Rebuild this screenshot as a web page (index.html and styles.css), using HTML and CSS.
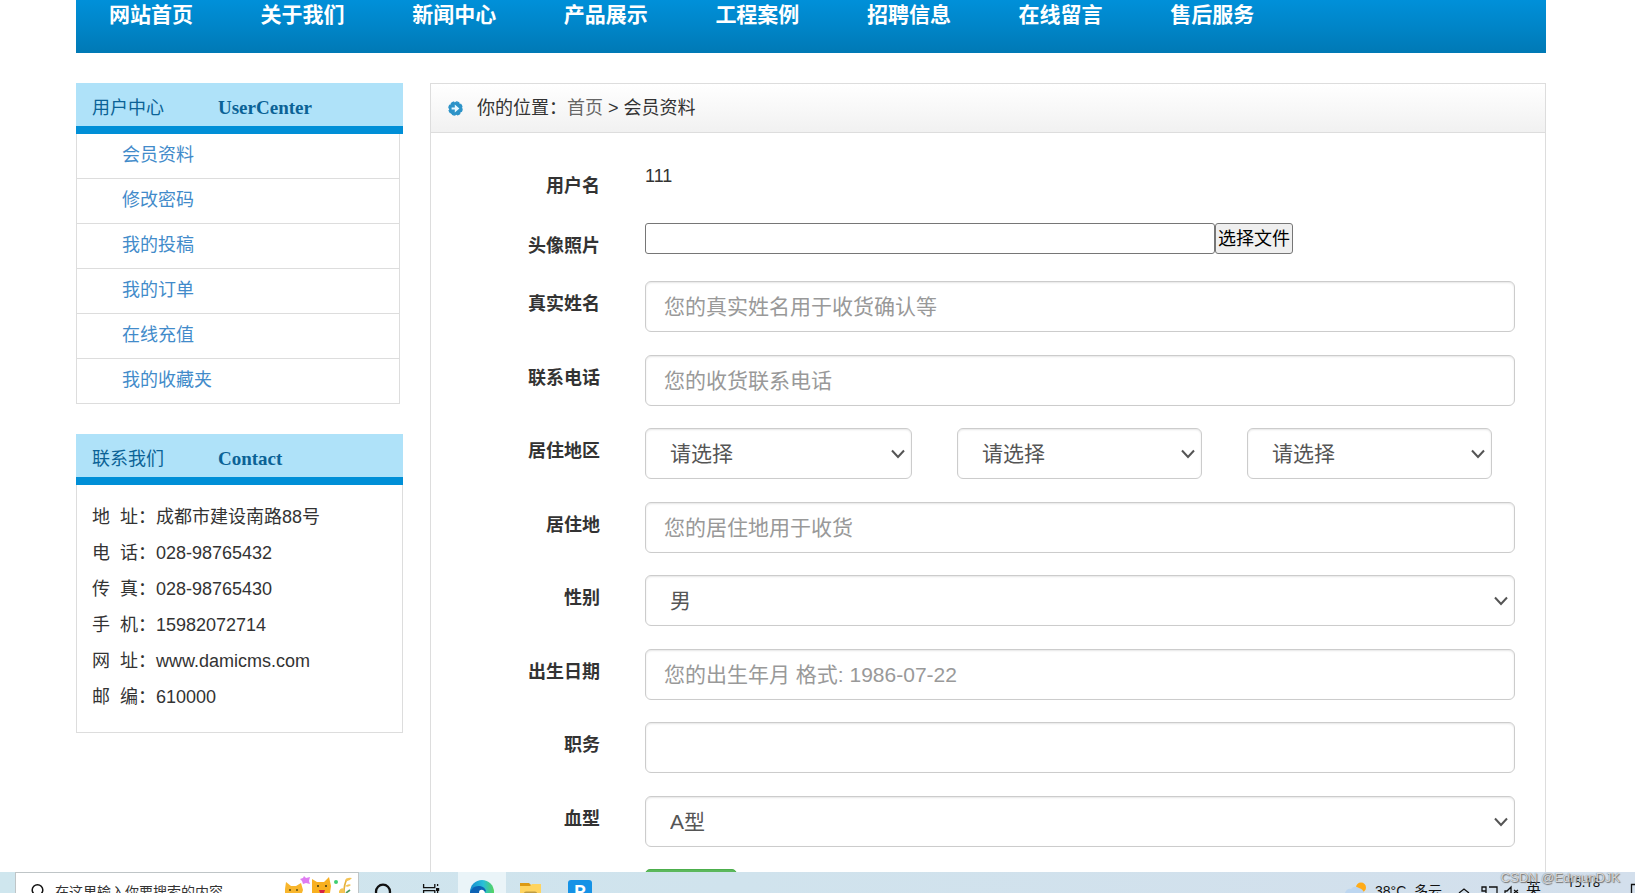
FILE: index.html
```html
<!DOCTYPE html>
<html lang="zh-CN">
<head>
<meta charset="utf-8">
<title>会员资料</title>
<link rel="stylesheet" href="styles.css">
</head>
<body>
<div class="page">
  <nav class="nav">
    <a href="#">网站首页</a>
    <a href="#">关于我们</a>
    <a href="#">新闻中心</a>
    <a href="#">产品展示</a>
    <a href="#">工程案例</a>
    <a href="#">招聘信息</a>
    <a href="#">在线留言</a>
    <a href="#">售后服务</a>
  </nav>
  <div class="columns">
    <aside class="sidebar">
      <section>
        <h2 class="side-head">用户中心<span class="side-en">UserCenter</span></h2>
        <ul class="side-menu">
          <li><a href="#">会员资料</a></li>
          <li><a href="#">修改密码</a></li>
          <li><a href="#">我的投稿</a></li>
          <li><a href="#">我的订单</a></li>
          <li><a href="#">在线充值</a></li>
          <li><a href="#">我的收藏夹</a></li>
        </ul>
      </section>
      <section>
        <h2 class="side-head">联系我们<span class="side-en">Contact</span></h2>
        <div class="contact">
          <div>地&nbsp; 址：成都市建设南路88号</div>
          <div>电&nbsp; 话：028-98765432</div>
          <div>传&nbsp; 真：028-98765430</div>
          <div>手&nbsp; 机：15982072714</div>
          <div>网&nbsp; 址：www.damicms.com</div>
          <div>邮&nbsp; 编：610000</div>
        </div>
      </section>
    </aside>
    <main class="main">
      <div class="crumbs">
        <svg class="crumb-icon" width="15" height="15" viewBox="0 0 15 15"><circle cx="7.5" cy="7.5" r="6.6" fill="#2d93c8" stroke="#2d93c8" stroke-width="1.4" stroke-dasharray="3.6 1.6"/><path d="M3.6 6.4h3.2V3.6l4.6 3.9-4.6 3.9V8.6H3.6z" fill="#e8f8ff"/></svg>
        <span>你的位置：<a href="#">首页</a> &gt; 会员资料</span>
      </div>
      <form class="form">
        <div class="row row-name">
          <span class="label">用户名</span>
          <div class="static">111</div>
        </div>
        <div class="row row-file">
          <label class="label" for="photo">头像照片</label>
          <div class="file"><input class="file-input" id="photo" type="text"><button class="file-button" type="button">选择文件</button></div>
        </div>
        <div class="row">
          <label class="label" for="realname">真实姓名</label>
          <input class="control" id="realname" type="text" placeholder="您的真实姓名用于收货确认等">
        </div>
        <div class="row">
          <label class="label" for="phone">联系电话</label>
          <input class="control" id="phone" type="text" placeholder="您的收货联系电话">
        </div>
        <div class="row">
          <label class="label" for="province">居住地区</label>
          <div class="thirds">
            <div><select class="control" id="province"><option>请选择</option></select></div>
            <div><select class="control" aria-label="城市"><option>请选择</option></select></div>
            <div><select class="control" aria-label="区县"><option>请选择</option></select></div>
          </div>
        </div>
        <div class="row">
          <label class="label" for="address">居住地</label>
          <input class="control" id="address" type="text" placeholder="您的居住地用于收货">
        </div>
        <div class="row">
          <label class="label" for="sex">性别</label>
          <select class="control" id="sex"><option>男</option><option>女</option></select>
        </div>
        <div class="row">
          <label class="label" for="birth">出生日期</label>
          <input class="control" id="birth" type="text" placeholder="您的出生年月 格式: 1986-07-22">
        </div>
        <div class="row">
          <label class="label" for="job">职务</label>
          <input class="control" id="job" type="text">
        </div>
        <div class="row">
          <label class="label" for="blood">血型</label>
          <select class="control" id="blood"><option>A型</option><option>B型</option></select>
        </div>
        <div class="row">
          <span class="label"></span>
          <button class="submit" type="submit" aria-label="提交"></button>
        </div>
      </form>
    </main>
  </div>
</div>
<footer class="taskbar">
  <div class="search">
    <svg width="39" height="20" viewBox="0 0 39 20"><circle cx="21.5" cy="17" r="5.3" fill="none" stroke="#111" stroke-width="1.5"/></svg>
    <span class="search-text">在这里输入你要搜索的内容</span>
    <svg width="74" height="20" viewBox="0 0 74 20">
      <path d="M1 20v-4l1-7 5 4h5l5-3 2 7-1 3z" fill="#f8b62d"/><path d="M6 16v2M13 16v2" stroke="#6b5410" stroke-width="1.6"/>
      <path d="M20 3l2 2 4-1-1 4 1 3-4-1-3 1-1-3-2-2 3-1z" fill="#df7cf2"/>
      <path d="M28 20V6l5 3h7l5-5 2 9-1 7z" fill="#f8b01f"/><path d="M34 12v2M42 12v2" stroke="#5d4d12" stroke-width="1.8"/><path d="M35 17h6l-1 3h-4z" fill="#d82244"/>
      <circle cx="52" cy="9" r="2" fill="#3fce72"/>
      <path d="M60 20q0-9 3-14" stroke="#e5b13b" stroke-width="1.6" fill="none"/><path d="M61 8q1-4 7-3-3 4-7 3zM61 13q4-3 6-1-3 3-6 1zM55 18q2-4 5-2v4h-5z" fill="#f4c454"/><path d="M62 20l4-3" stroke="#4c9b61" stroke-width="1.6"/>
    </svg>
  </div>
  <svg class="app" viewBox="0 0 48 21"><circle cx="24" cy="19.7" r="7" fill="none" stroke="#111" stroke-width="2.3"/></svg>
  <svg class="app" viewBox="0 0 48 21"><path d="M16.6 12v3.6h11.2V12M16.6 21v-2.4h11.2V21M30.6 12v2M30.6 19v2" fill="none" stroke="#111" stroke-width="1.3"/><rect x="29" y="16" width="3.2" height="3" fill="#111"/></svg>
  <svg class="app app-active" viewBox="0 0 48 21">
    <defs><linearGradient id="edge" x1="0" x2="1"><stop offset="0" stop-color="#168cce"/><stop offset=".55" stop-color="#29bfd8"/><stop offset="1" stop-color="#55d45d"/></linearGradient></defs>
    <circle cx="24" cy="20" r="12" fill="url(#edge)"/><path d="M12 20q3-7 10-6 5 1 6 5l-2 2H12z" fill="#0d63b5"/><path d="M21 21q0-4 4-3 2 1 2 3z" fill="#fff"/>
  </svg>
  <svg class="app" viewBox="0 0 48 21"><path d="M14 11h9l2 2v3H14z" fill="#dc9a13"/><path d="M14 14h10l2-2h9v9H14z" fill="#ffd45f"/><path d="M18 21q0-1.500 2-1.500h9q2 0 2 1.500z" fill="#bf9c42"/></svg>
  <div class="app app-letter"><span>P</span></div>
  <div class="tray">
    <svg width="24" height="21" viewBox="0 0 24 21"><circle cx="17" cy="15.500" r="5" fill="#ffab18"/><path d="M1 21q2-5 6-4 3-4 8-1 4 1 5 5z" fill="#bdd6f0"/></svg>
    <span class="weather">38°C&nbsp; 多云</span>
    <svg class="tray-icons" width="64" height="21" viewBox="0 0 64 21" fill="none" stroke="#111" stroke-width="1.300"><path d="M2 21l5-4 5 4M32 15h8v6M29 21v-3M25 15h4v4h-4zM48 21v-2h2l4-4v6M57 18l4 3M61 18l-4 3"/></svg>
    <span class="ime">英</span>
    <span class="clock">15:18</span>
    <svg width="6" height="21" viewBox="0 0 6 21"><path d="M6 12.500H2.500V21" fill="none" stroke="#111" stroke-width="1.300"/></svg>
  </div>
</footer>
<div class="watermark">CSDN @EdmunDJK</div>
</body>
</html>
```
FILE: styles.css
```css
* { box-sizing: border-box; }

body {
  margin: 0;
  height: 100vh;
  display: flex;
  flex-direction: column;
  overflow: hidden;
  background: #fff;
  color: #333;
  font: 18px/26px "Liberation Sans", "Noto Sans CJK SC", sans-serif;
}

a { text-decoration: none; }
input, select, button { font-family: inherit; margin: 0; }

.page {
  flex: 1;
  min-height: 0;
  overflow: hidden;
  padding: 0 89px 0 76px;
}

/* top navigation */
.nav {
  display: flex;
  height: 53px;
  padding-left: 33px;
  background: linear-gradient(#0090d9, #0085c8 50%, #0079b5);
}
.nav a {
  flex: 0 0 auto;
  width: 10.55%;
  color: #fff;
  font-size: 21px;
  font-weight: bold;
  line-height: 30px;
}

.columns {
  display: flex;
  align-items: flex-start;
  gap: 27px;
  margin-top: 30px;
}

/* left column */
.sidebar {
  flex: 0 0 327px;
  display: flex;
  flex-direction: column;
  gap: 30px;
}
.side-head {
  display: flex;
  align-items: center;
  gap: 54px;
  height: 51px;
  margin: 0;
  padding: 6px 16px 0;
  background: #afe2f9;
  border-bottom: 8px solid #008fd7;
  color: #0b6296;
  font-size: 18px;
  font-weight: normal;
}
.side-en {
  font: bold 19px/26px "Liberation Serif", serif;
}
.side-menu {
  list-style: none;
  margin: 0 3px 0 0;
  padding: 0;
  border: 1px solid #ddd;
  border-width: 0 1px 0 1px;
}
.side-menu li {
  height: 45px;
  padding-left: 45px;
  border-bottom: 1px solid #ddd;
  line-height: 43px;
}
.side-menu a { color: #428bca; }
.contact {
  padding: 14px 15px 17px;
  border: 1px solid #ddd;
  border-top: 0;
  line-height: 36px;
}

/* right column */
.main {
  flex: 1;
  min-width: 0;
  border: 1px solid #ddd;
}
.crumbs {
  display: flex;
  align-items: center;
  gap: 14px;
  height: 49px;
  padding-left: 17px;
  background: linear-gradient(#fff, #f1f1f1);
  border-bottom: 1px solid #ddd;
}
.crumbs a { color: #666; }
.form { padding: 30px 30px 30px 0; }
.row {
  display: flex;
  align-items: flex-start;
  gap: 45px;
  margin-bottom: 22px;
}
.row:nth-child(odd) { margin-bottom: 23px; }
.label {
  flex: 0 0 169px;
  padding-top: 10px;
  font-weight: bold;
  text-align: right;
}
.row-name { height: 37px; }
.row-file { height: 36px; }
.static { line-height: 26px; }
.file { display: flex; flex: 1; }
.file-input {
  width: 570px;
  height: 31px;
  border: 1px solid #767676;
  border-radius: 3px;
  font-size: 18px;
}
.file-button {
  height: 31px;
  padding: 0 2px;
  border: 1px solid #767676;
  border-radius: 3px;
  background: #efefef;
  color: #000;
  font-size: 18px;
  line-height: 26px;
}
.control {
  flex: 1;
  width: 100%;
  min-width: 0;
  height: 51px;
  padding: 9px 18px;
  border: 1px solid #ccc;
  border-radius: 6px;
  background: #fff;
  box-shadow: inset 0 1px 2px rgba(0, 0, 0, .1);
  color: #555;
  font-size: 21px;
}
select.control {
  appearance: none;
  padding: 9px 30px 9px 24px;
  background: #fff url("data:image/svg+xml,%3Csvg xmlns='http://www.w3.org/2000/svg' width='14' height='10'%3E%3Cpath d='M1 1.500l6 6.500 6-6.500' fill='none' stroke='%23555' stroke-width='2'/%3E%3C/svg%3E") no-repeat right 6px center;
}
.control::placeholder { color: #999; opacity: 1; }
.thirds {
  flex: 1;
  display: grid;
  grid-template-columns: repeat(3, 1fr);
}
.thirds > div { padding: 0 23px 0 22px; }
.thirds > div:first-child { padding-left: 0; }
.submit {
  width: 92px;
  height: 44px;
  border: 1px solid #4cae4c;
  border-radius: 5px;
  background: #5cb85c;
}

/* desktop taskbar */
.taskbar {
  flex: 0 0 21px;
  display: flex;
  align-items: flex-start;
  overflow: hidden;
  padding-left: 15px;
  background: linear-gradient(90deg, #cfe6ee, #d0e3ed 45%, #d3dfec);
  color: #111;
}
.search {
  display: flex;
  width: 344px;
  height: 40px;
  border: 1px solid #bfc5c7;
  background: #fff;
}
.search-text {
  flex: 1;
  padding-top: 9px;
  font-size: 14px;
  line-height: 20px;
  color: #333;
}
.app { width: 48px; height: 21px; }
.app-active { margin-left: 3px; background: #eaf4f8; }
.app-letter { padding: 8px 10px 0 14px; }
.app-letter span {
  display: block;
  height: 24px;
  border-radius: 3px;
  background: #1592e6;
  color: #fff;
  font: bold 18px/24px Roboto, sans-serif;
  text-align: center;
}
.tray {
  display: flex;
  margin-left: auto;
  font-size: 14px;
  line-height: 20px;
}
.weather { width: 89px; padding: 9px 0 0 7px; }
.tray-icons { margin-right: 5px; }
.ime { width: 41px; padding-top: 7px; font-size: 15px; }
.clock { width: 62px; padding-top: 0; font: 13px/20px "Noto Sans", sans-serif; }

.watermark {
  position: absolute;
  right: 15px;
  bottom: 5px;
  color: rgba(255, 255, 255, .75);
  font-size: 13px;
  line-height: 20px;
  text-shadow: 0 0 1px #555, 1px 1px 1px #777;
}
```
